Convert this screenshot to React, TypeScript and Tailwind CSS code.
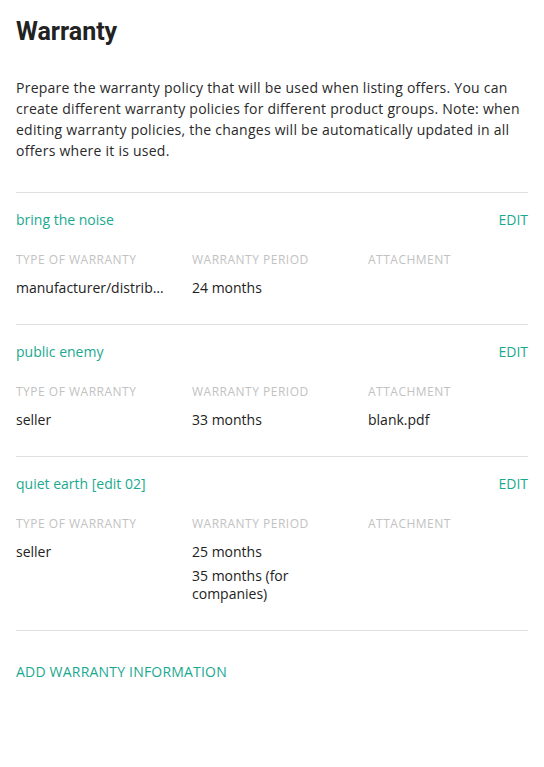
import React from 'react';

type Policy = {
  name: string;
  type: string;
  periods: string[];
  attachment?: string;
};

const policies: Policy[] = [
  { name: 'bring the noise', type: 'manufacturer/distributor', periods: ['24 months'] },
  { name: 'public enemy', type: 'seller', periods: ['33 months'], attachment: 'blank.pdf' },
  { name: 'quiet earth [edit 02]', type: 'seller', periods: ['25 months', '35 months (for companies)'] },
];

const Label: React.FC<{ children: React.ReactNode }> = ({ children }) => (
  <div className="text-[12px] leading-4 tracking-[0.5px] uppercase text-[#c2c2c2]">{children}</div>
);

const PolicyRow: React.FC<{ policy: Policy }> = ({ policy }) => (
  <div className="border-t border-[#e0e0e0] pt-[17px] pb-[27px]">
    <div className="flex justify-between items-center text-[14px] leading-5 text-[#1aa98f]">
      <span>{policy.name}</span>
      <span className="uppercase">Edit</span>
    </div>
    <div className="flex mt-[22px]">
      <div className="w-[176px] pr-5">
        <Label>Type of warranty</Label>
        <div className="mt-[11px] text-[14px] leading-[18px] truncate">{policy.type}</div>
      </div>
      <div className="w-[176px] pr-4">
        <Label>Warranty period</Label>
        <div className="mt-[11px] flex flex-col gap-[6px] text-[14px] leading-[18px]">
          {policy.periods.map((p) => (
            <div key={p}>{p}</div>
          ))}
        </div>
      </div>
      <div className="w-[160px]">
        <Label>Attachment</Label>
        {policy.attachment && (
          <div className="mt-[11px] text-[14px] leading-[18px]">{policy.attachment}</div>
        )}
      </div>
    </div>
  </div>
);

export default function App() {
  return (
    <div className="min-h-[767px] bg-white px-4 pt-[16px] text-[#222] font-['Open_Sans',sans-serif]">
      <h1 className="text-[25px] leading-8 font-bold font-['Roboto',sans-serif]">Warranty</h1>
      <p className="mt-[29px] text-[14px] leading-[21px] tracking-[0.25px] text-[#2a2a2a]">
        Prepare the warranty policy that will be used when listing offers. You can create different warranty
        policies for different product groups. Note: when editing warranty policies, the changes will be
        automatically updated in all offers where it is used.
      </p>
      <div className="mt-[31px]">
        {policies.map((p) => (
          <PolicyRow key={p.name} policy={p} />
        ))}
        <div className="border-t border-[#e0e0e0] pt-[28px]">
          <span className="text-[14px] leading-5 tracking-[0.2px] uppercase text-[#1aa98f]">Add warranty information</span>
        </div>
      </div>
    </div>
  );
}
